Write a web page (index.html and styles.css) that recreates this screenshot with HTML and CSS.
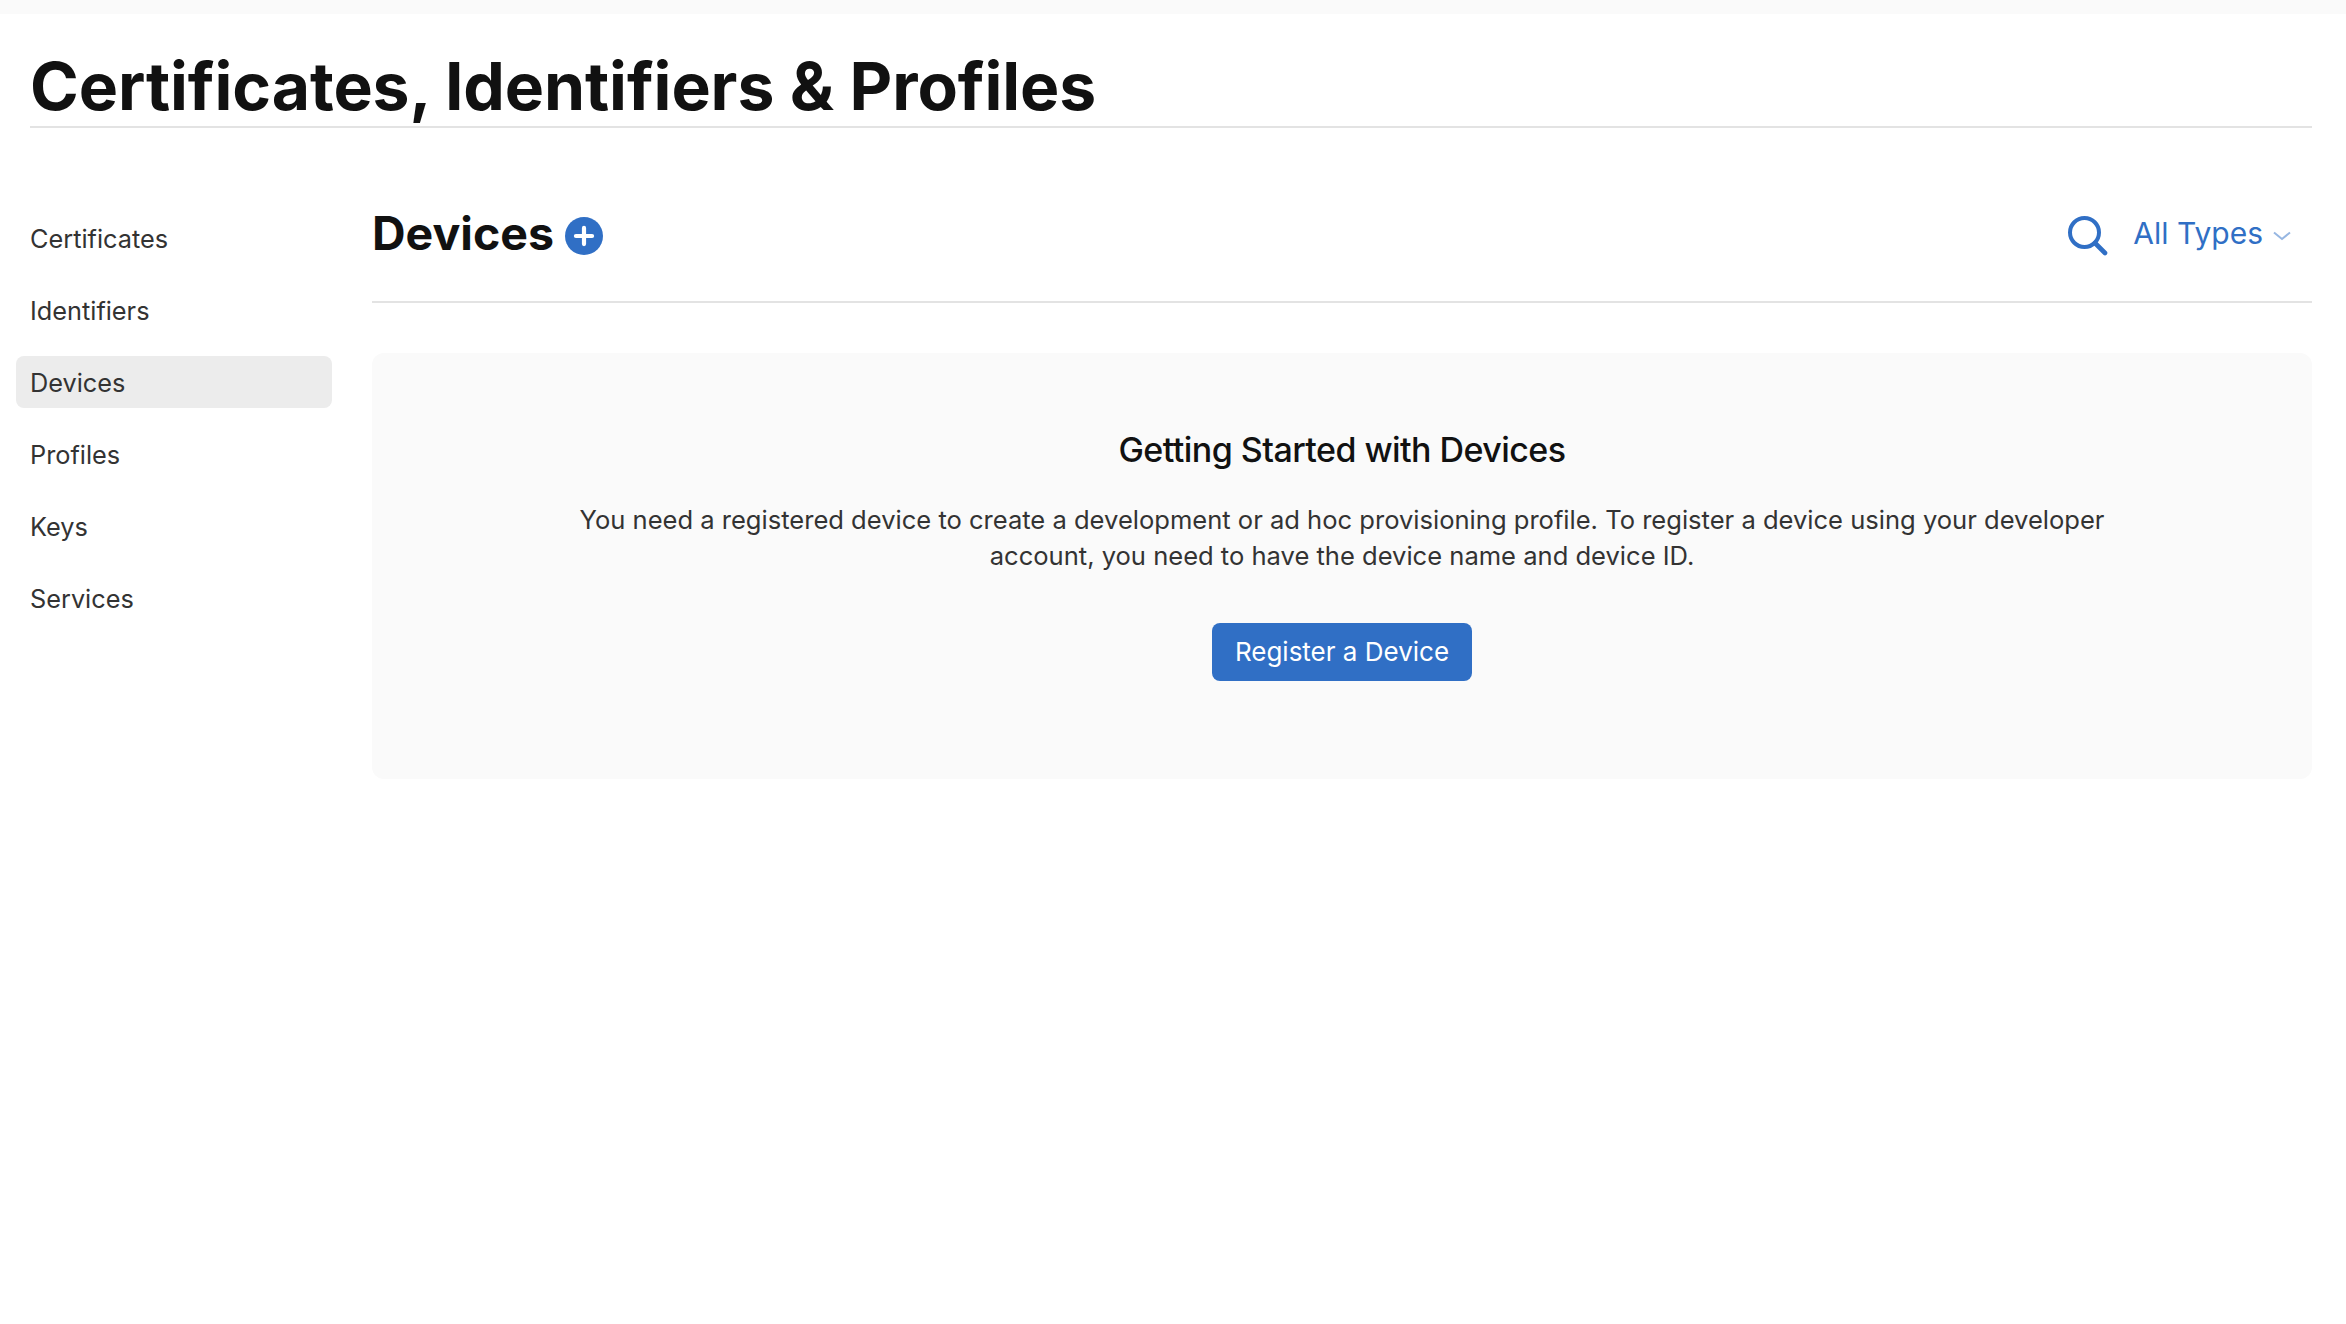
FILE: index.html
```html
<!DOCTYPE html>
<html lang="en">
<head>
  <meta charset="UTF-8">
  <title>Certificates, Identifiers &amp; Profiles</title>
  <link rel="stylesheet" href="styles.css">
</head>
<body>
  <div class="top-strip"></div>

  <header class="page-header">
    <h1>Certificates, Identifiers &amp; Profiles</h1>
  </header>

  <div class="layout">
    <nav class="sidebar">
      <a class="nav-item">Certificates</a>
      <a class="nav-item">Identifiers</a>
      <a class="nav-item active">Devices</a>
      <a class="nav-item">Profiles</a>
      <a class="nav-item">Keys</a>
      <a class="nav-item">Services</a>
    </nav>

    <main class="content">
      <div class="content-head">
        <div class="head-left">
          <h2>Devices</h2>
          <svg class="add-icon" viewBox="0 0 40 40" aria-hidden="true">
            <circle cx="20" cy="20" r="20" fill="#306fc5"/>
            <path d="M20 11.5v17M11.5 20h17" stroke="#fff" stroke-width="4.4" stroke-linecap="round"/>
          </svg>
        </div>
        <div class="head-right">
          <svg class="search-icon" viewBox="0 0 40 40" aria-hidden="true">
            <circle cx="16.5" cy="16.5" r="14.5" fill="none" stroke="#306fc5" stroke-width="4"/>
            <path d="M27 27l10 10" stroke="#306fc5" stroke-width="4.6" stroke-linecap="round"/>
          </svg>
          <span class="filter">All Types</span>
          <svg class="chevron" viewBox="0 0 18 10" aria-hidden="true">
            <path d="M1 1.5l8 6.5 8-6.5" fill="none" stroke="#97b7e2" stroke-width="2"/>
          </svg>
        </div>
      </div>

      <section class="panel">
        <h3>Getting Started with Devices</h3>
        <p>You need a registered device to create a development or ad hoc provisioning profile. To register a device using your developer account, you need to have the device name and device ID.</p>
        <button class="btn-primary">Register a Device</button>
      </section>
    </main>
  </div>
</body>
</html>
```

FILE: styles.css
```css
body {
  margin: 0;
  font-family: Inter, "Liberation Sans", sans-serif;
  background-color: #fff;
  color: #333;
}

.top-strip {
  height: 14px;
  background-color: #fafafa;
}

.page-header {
  margin: 0 34px 0 30px;
  height: 112px;
  border-bottom: 2px solid #e3e3e3;
}

h1 {
  margin: 0;
  padding-top: 34px;
  font-size: 66px;
  line-height: 76px;
  font-weight: 700;
  letter-spacing: -0.1px;
  color: #111;
}

.layout {
  display: flex;
  margin-right: 34px;
  padding-top: 68px;
}

.sidebar {
  width: 372px;
  flex-shrink: 0;
  padding-top: 16px;
  box-sizing: border-box;
}

.nav-item {
  display: block;
  width: 316px;
  height: 52px;
  margin: 0 0 20px 16px;
  padding-left: 14px;
  box-sizing: border-box;
  border-radius: 8px;
  font-size: 25.3px;
  line-height: 54px;
  color: #333;
}

.nav-item.active {
  background-color: #ececec;
}

.content {
  flex: 1;
}

.content-head {
  display: flex;
  justify-content: space-between;
  align-items: center;
  height: 80px;
  padding-bottom: 25px;
  border-bottom: 2px solid #e3e3e3;
}

.head-left, .head-right {
  display: flex;
  align-items: center;
}

h2 {
  margin: 0 0 6px;
  font-size: 46.5px;
  line-height: 56px;
  font-weight: 700;
  color: #111;
}

.add-icon {
  width: 38px;
  height: 38px;
  margin-left: 11px;
}

.search-icon {
  width: 40px;
  height: 40px;
  margin-right: 25px;
}

.filter {
  margin-bottom: 6px;
  font-size: 30px;
  color: #306fc5;
}

.chevron {
  width: 18px;
  height: 10px;
  margin: 0 21px 0 10px;
}

.panel {
  margin-top: 50px;
  height: 426px;
  box-sizing: border-box;
  padding: 75px 190px 0;
  background-color: #fafafa;
  border-radius: 12px;
  text-align: center;
}

h3 {
  margin: 0;
  font-size: 34px;
  line-height: 44px;
  font-weight: 500;
  letter-spacing: -0.55px;
  color: #111;
}

.panel p {
  margin: 30px 0 0;
  font-size: 25.55px;
  line-height: 36px;
  color: #333;
}

.btn-primary {
  display: block;
  margin: 49px auto 0;
  padding: 0 0 2px;
  width: 260px;
  height: 58px;
  border: none;
  border-radius: 8px;
  background-color: #306fc5;
  color: #fff;
  font-family: inherit;
  font-size: 26px;
}
```
